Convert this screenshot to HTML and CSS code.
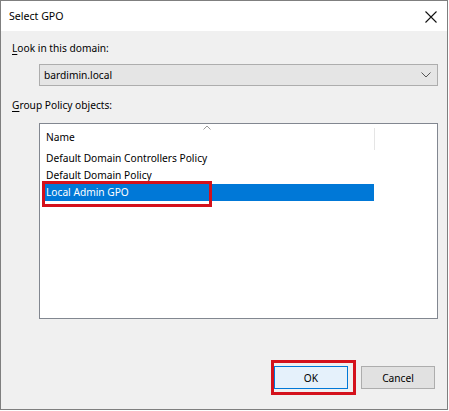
FILE: index.html
```html
<!DOCTYPE html>
<html>
<head>
<meta charset="utf-8">
<link rel="stylesheet" href="styles.css">
</head>
<body>
<div class="window">
  <div class="titlebar">
    <span class="title">Select GPO</span>
    <svg class="close" width="12" height="12" viewBox="0 0 12 12"><path d="M0.5 0.5 L11.5 11.5 M11.5 0.5 L0.5 11.5" stroke="#111" stroke-width="1.1" fill="none"/></svg>
  </div>
  <div class="content">
    <div class="label"><u>L</u>ook in this domain:</div>
    <div class="combo">
      <span class="combo-text">bardimin.local</span>
      <svg class="chevron" width="10" height="6" viewBox="0 0 10 6"><path d="M0.5 0.5 L5 5 L9.5 0.5" stroke="#555" stroke-width="1" fill="none"/></svg>
    </div>
    <div class="label label-group"><u>G</u>roup Policy objects:</div>
    <div class="list">
      <div class="header">
        <div class="col-name">
          <span class="col-text">Name</span>
          <svg class="sort" width="8" height="5" viewBox="0 0 8 5"><path d="M0.5 4.5 L4 1 L7.5 4.5" stroke="#9a9a9a" stroke-width="1" fill="none"/></svg>
        </div>
        <div class="col-divider"></div>
      </div>
      <div class="row">Default Domain Controllers Policy</div>
      <div class="row">Default Domain Policy</div>
      <div class="row selected">Local Admin GPO<span class="mark mark-row"></span></div>
    </div>
    <div class="buttons">
      <button class="btn btn-ok">OK<span class="mark mark-ok"></span></button>
      <button class="btn">Cancel</button>
    </div>
  </div>
</div>
</body>
</html>
```
FILE: styles.css
```css
* { box-sizing: border-box; }
html, body { margin: 0; padding: 0; background: #ffffff; }
body {
  font-family: "Noto Sans", "Open Sans", "DejaVu Sans", sans-serif;
  font-size: 10.2px;
  color: #000;
}
.window {
  width: 448px;
  height: 410px;
  border: 1px solid #7f7f7f;
  background: #f0f0f0;
  display: flex;
  flex-direction: column;
}
.titlebar {
  height: 30px;
  background: #ffffff;
  display: flex;
  align-items: center;
  justify-content: space-between;
  padding: 0 10px 0 8px;
}
.title { font-size: 10.6px; line-height: 16px; }
.close { display: block; margin-top: 1px; }
.content {
  flex: 1;
  display: flex;
  flex-direction: column;
  padding: 9px 12px 0 11px;
}
.label { line-height: 16px; height: 16px; }
.label u { text-decoration-thickness: 1px; text-underline-offset: 2px; }
.combo {
  margin: 8px 0 0 27px;
  width: 399px;
  height: 22px;
  background: #e5e5e5;
  border: 1px solid #adadad;
  display: flex;
  align-items: center;
  justify-content: space-between;
  padding: 0 6px 0 4px;
}
.combo-text { line-height: 16px; }
.chevron { display: block; }
.label-group { margin-top: 11px; }
.list {
  margin: 10px 0 0 27px;
  width: 399px;
  height: 196px;
  background: #ffffff;
  border: 1px solid #828790;
  display: flex;
  flex-direction: column;
}
.header {
  height: 26px;
  display: flex;
  flex-shrink: 0;
}
.col-name {
  width: 334px;
  position: relative;
  display: flex;
  align-items: flex-end;
  padding: 0 0 5px 6px;
}
.col-text { line-height: 16px; }
.sort {
  position: absolute;
  left: 163px;
  top: 1px;
}
.col-divider {
  width: 1px;
  margin-top: 4px;
  height: 22px;
  background: #e5e5e5;
}
.row {
  position: relative;
  margin-left: 3px;
  width: 331px;
  height: 17px;
  line-height: 17px;
  padding-left: 3px;
  white-space: nowrap;
}
.row.selected {
  background: #0078d7;
  color: #ffffff;
}
.mark {
  position: absolute;
  border: 3px solid #d4111b;
  pointer-events: none;
}
.mark-row {
  left: -1px;
  top: -3px;
  width: 170px;
  height: 26px;
}
.buttons {
  margin-top: 47px;
  display: flex;
  justify-content: flex-end;
  gap: 13px;
}
.btn {
  position: relative;
  width: 74px;
  height: 23px;
  font-family: inherit;
  font-size: 10.2px;
  color: #000;
  background: #e1e1e1;
  border: 1px solid #adadad;
  padding: 0;
  margin: 0;
}
.btn-ok {
  background: #e5f1fb;
  border: 1px solid #0078d7;
}
.mark-ok {
  left: -4px;
  top: -7px;
  width: 85px;
  height: 35px;
}
```
